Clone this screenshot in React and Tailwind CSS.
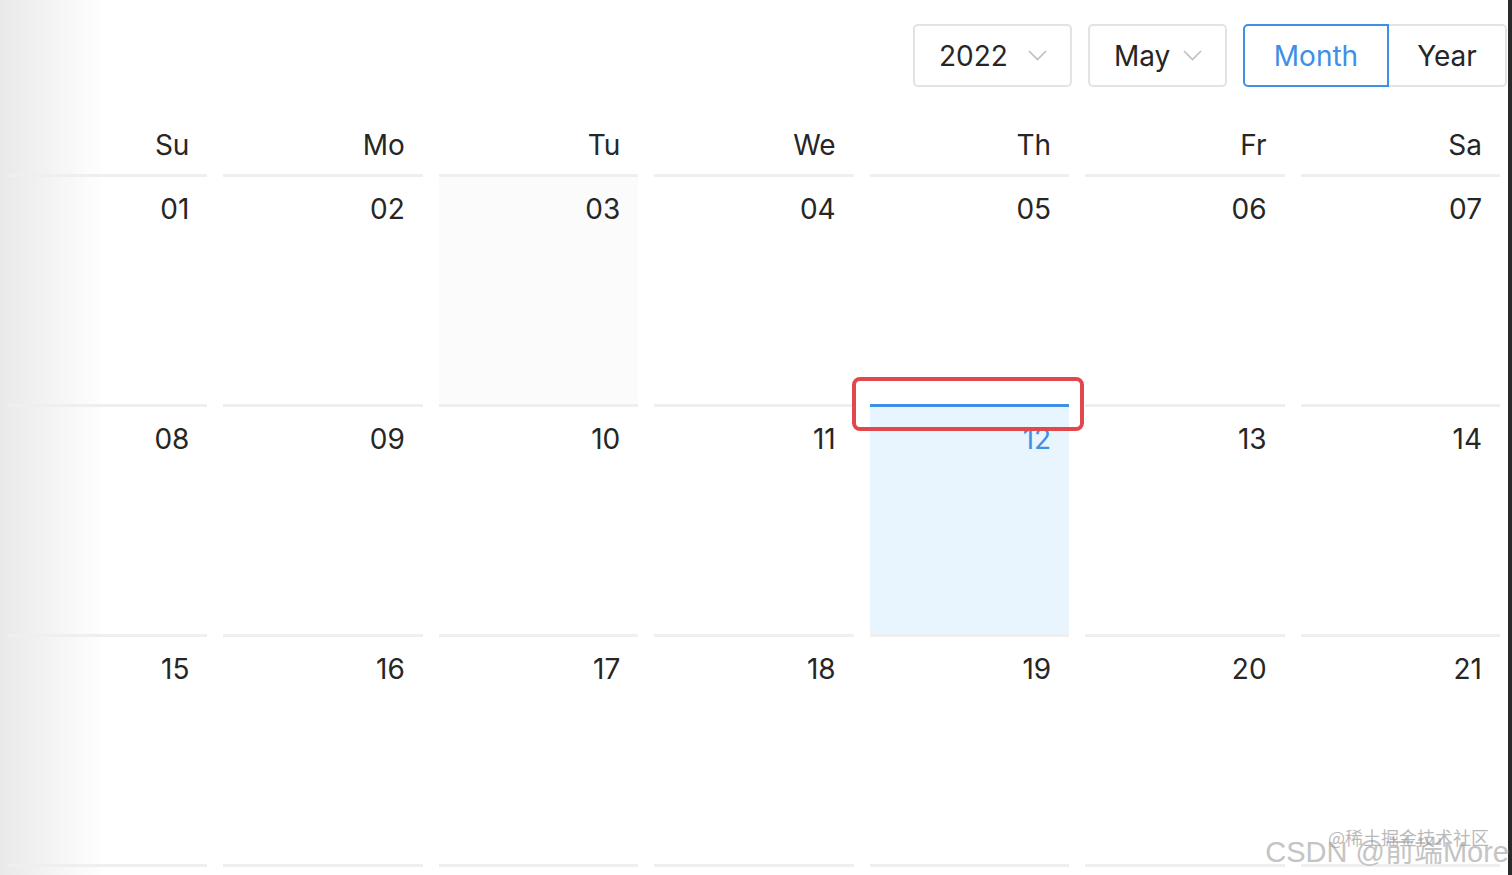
import React from 'react';

const weekDays = ['Su', 'Mo', 'Tu', 'We', 'Th', 'Fr', 'Sa'];

// the fourth week sits just below the fold: only its top border shows
const weeks = [
    ['01', '02', '03', '04', '05', '06', '07'],
    ['08', '09', '10', '11', '12', '13', '14'],
    ['15', '16', '17', '18', '19', '20', '21'],
    ['', '', '', '', '', '', ''],
];

const Chevron = () => (
    <svg width="19" height="11" viewBox="0 0 19 11" fill="none">
        <polyline points="1,1 9.5,9.5 18,1" stroke="#bfbfbf" strokeWidth="1.6" />
    </svg>
);

const Select = ({ value, width }) => (
    <div className={`${width} h-[63px] border-2 border-[#e3e3e3] rounded-[5px] bg-white flex items-center justify-between pl-[24px] pr-[23px]`}>
        <span className="text-[28px] text-[#262626]">{value}</span>
        <Chevron />
    </div>
);

const DayCell = ({ value, today, hover }) => {
    let cell = 'border-[#efefef] text-[#262626]';
    if (today) cell = 'border-[#3e8fe6] bg-[#e9f5fe] text-[#3e8fe6]';
    else if (hover) cell = 'border-[#efefef] bg-[#fbfbfb] text-[#262626]';
    return (
        <div className="px-[8px]">
            <div className={`h-[230px] border-t-[3px] pt-[8px] pr-[18px] text-right text-[28px] leading-[48px] ${cell}`}>
                {value}
            </div>
        </div>
    );
};

export default function App() {
    return (
        <div className="w-[1512px] h-[875px] overflow-hidden flex font-['Inter',sans-serif] relative">
            <div className="w-[1508px] shrink-0 bg-[linear-gradient(to_right,#e9e9e9,#ffffff_105px)] flex flex-col">
                {/* Header controls */}
                <div className="shrink-0 flex justify-end items-center pt-[24px] pr-[1px] gap-[16px]">
                    <Select value="2022" width="w-[159px]" />
                    <Select value="May" width="w-[139px]" />
                    <div className="flex h-[63px] text-[28px]">
                        <div className="w-[146px] border-2 border-[#3e8fe6] rounded-l-[5px] bg-white text-[#3e8fe6] flex items-center justify-center">
                            Month
                        </div>
                        <div className="w-[118px] border-2 border-l-0 border-[#e3e3e3] rounded-r-[5px] bg-white text-[#262626] flex items-center justify-center">
                            Year
                        </div>
                    </div>
                </div>

                {/* Week days */}
                <div className="shrink-0 grid grid-cols-7 h-[87px] items-end pb-[11px]">
                    {weekDays.map((d) => (
                        <div key={d} className="text-right pr-[26px] text-[28px] leading-[36px] text-[#262626]">{d}</div>
                    ))}
                </div>

                {/* Dates */}
                <div className="shrink-0 grid grid-cols-7">
                    {weeks.map((week, wi) =>
                        week.map((d, di) => (
                            <DayCell key={`${wi}-${di}`} value={d} today={d === '12'} hover={d === '03'} />
                        ))
                    )}
                </div>
            </div>
            <div className="flex-1 bg-[#2a2a2a]" />

            {/* annotation */}
            <div className="absolute left-[852px] top-[377px] w-[232px] h-[54px] border-4 border-[#e2474b] rounded-[8px]" />

            {/* watermark */}
            <div className="absolute right-[3px] bottom-[8px] text-[29px] leading-none text-[#c4c4c4] font-['Liberation_Sans','Noto_Sans_CJK_SC',sans-serif] [text-shadow:0_0_2px_#fff]">
                CSDN @前端More
            </div>
            <div className="absolute left-[1328px] top-[828px] text-[18px] leading-none text-[#9a9a9a]/70 font-['Noto_Sans_CJK_SC',sans-serif]">
                @稀土掘金技术社区
            </div>
        </div>
    );
}
